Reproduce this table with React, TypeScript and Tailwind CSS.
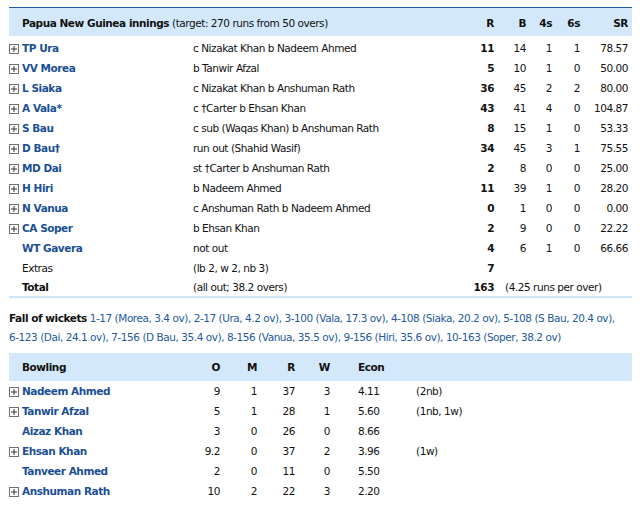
import React from "react";

const FONT = { fontFamily: '"DejaVu Sans", Verdana, sans-serif' };

function Plus() {
  return (
    <svg width="10" height="10" viewBox="0 0 10 10" className="block">
      <rect x="0.5" y="0.5" width="9" height="9" fill="#fff" stroke="#707070" />
      <line x1="2" y1="5" x2="8" y2="5" stroke="#333" />
      <line x1="5" y1="2" x2="5" y2="8" stroke="#333" />
    </svg>
  );
}

type Bat = [string, boolean, string, string, string, string, string, string];

const batting: Bat[] = [
  ["TP Ura", true, "c Nizakat Khan b Nadeem Ahmed", "11", "14", "1", "1", "78.57"],
  ["VV Morea", true, "b Tanwir Afzal", "5", "10", "1", "0", "50.00"],
  ["L Siaka", true, "c Nizakat Khan b Anshuman Rath", "36", "45", "2", "2", "80.00"],
  ["A Vala*", true, "c \u2020Carter b Ehsan Khan", "43", "41", "4", "0", "104.87"],
  ["S Bau", true, "c sub (Waqas Khan) b Anshuman Rath", "8", "15", "1", "0", "53.33"],
  ["D Bau\u2020", true, "run out (Shahid Wasif)", "34", "45", "3", "1", "75.55"],
  ["MD Dai", true, "st \u2020Carter b Anshuman Rath", "2", "8", "0", "0", "25.00"],
  ["H Hiri", true, "b Nadeem Ahmed", "11", "39", "1", "0", "28.20"],
  ["N Vanua", true, "c Anshuman Rath b Nadeem Ahmed", "0", "1", "0", "0", "0.00"],
  ["CA Soper", true, "b Ehsan Khan", "2", "9", "0", "0", "22.22"],
  ["WT Gavera", false, "not out", "4", "6", "1", "0", "66.66"],
];

type Bowl = [string, boolean, string, string, string, string, string, string];
const bowling: Bowl[] = [
  ["Nadeem Ahmed", true, "9", "1", "37", "3", "4.11", "(2nb)"],
  ["Tanwir Afzal", true, "5", "1", "28", "1", "5.60", "(1nb, 1w)"],
  ["Aizaz Khan", false, "3", "0", "26", "0", "8.66", ""],
  ["Ehsan Khan", true, "9.2", "0", "37", "2", "3.96", "(1w)"],
  ["Tanveer Ahmed", false, "2", "0", "11", "0", "5.50", ""],
  ["Anshuman Rath", true, "10", "2", "22", "3", "2.20", ""],
];

const batCols = "grid grid-cols-[13px_171px_267px_34px_32px_26px_28px_48px_4px]";
const bowlCols = "grid grid-cols-[13px_168px_30px_37px_38px_35px_77px_225px]";

export default function App() {
  return (
    <div className="w-[644px] h-[509px] bg-white text-[10.5px] tracking-[-0.45px] text-[#111]" style={FONT}>
      <div className="ml-[9px] w-[623px] pt-[7px]">
        <div className="h-px bg-[#1f5c9e]" />
        {/* batting header */}
        <div className={`${batCols} h-[28px] pt-[3px] items-center bg-[#d3e9fb]`}>
          <div />
          <div className="col-span-2 whitespace-nowrap">
            <span className="font-bold">Papua New Guinea innings</span> (target: 270 runs from 50 overs)
          </div>
          <div className="text-right font-bold">R</div>
          <div className="text-right font-bold">B</div>
          <div className="text-right font-bold">4s</div>
          <div className="text-right font-bold">6s</div>
          <div className="text-right font-bold">SR</div>
          <div />
        </div>
        <div className="mt-[2px]">
          {batting.map((r) => (
            <div key={r[0]} className={`${batCols} h-[20px] pt-[2px] items-center`}>
              <div>{r[1] ? <Plus /> : null}</div>
              <div className="font-bold text-[#1b4f95] whitespace-nowrap">{r[0]}</div>
              <div className="whitespace-nowrap">{r[2]}</div>
              <div className="text-right font-bold">{r[3]}</div>
              <div className="text-right">{r[4]}</div>
              <div className="text-right">{r[5]}</div>
              <div className="text-right">{r[6]}</div>
              <div className="text-right">{r[7]}</div>
              <div />
            </div>
          ))}
          <div className={`${batCols} h-[20px] pt-[2px] items-center`}>
            <div />
            <div>Extras</div>
            <div>(lb 2, w 2, nb 3)</div>
            <div className="text-right font-bold">7</div>
            <div className="col-span-5" />
          </div>
          <div className={`${batCols} h-[18px] pt-[1px] items-center`}>
            <div />
            <div className="font-bold">Total</div>
            <div>(all out; 38.2 overs)</div>
            <div className="text-right font-bold">163</div>
            <div className="col-span-5 pl-[11px] whitespace-nowrap">(4.25 runs per over)</div>
          </div>
        </div>
        <div className="h-[2px] bg-[#cfe6f8]" />

        {/* fall of wickets */}
        <div className="mt-[11px] leading-[19px] whitespace-nowrap text-[#25599c]">
          <span className="font-bold text-[#111]">Fall of wickets</span>{" "}
          1-17 (Morea, 3.4 ov), 2-17 (Ura, 4.2 ov), 3-100 (Vala, 17.3 ov), 4-108 (Siaka, 20.2 ov), 5-108 (S Bau, 20.4 ov),
          <br />
          6-123 (Dai, 24.1 ov), 7-156 (D Bau, 35.4 ov), 8-156 (Vanua, 35.5 ov), 9-156 (Hiri, 35.6 ov), 10-163 (Soper, 38.2 ov)
        </div>

        {/* bowling */}
        <div className={`${bowlCols} mt-[6px] h-[28px] pt-[2px] items-center bg-[#d3e9fb] font-bold`}>
          <div />
          <div>Bowling</div>
          <div className="text-right">O</div>
          <div className="text-right">M</div>
          <div className="text-right">R</div>
          <div className="text-right">W</div>
          <div className="pl-[28px]">Econ</div>
          <div />
        </div>
        {bowling.map((r) => (
          <div key={r[0]} className={`${bowlCols} h-[20px] pt-[2px] items-center`}>
            <div>{r[1] ? <Plus /> : null}</div>
            <div className="font-bold text-[#1b4f95] whitespace-nowrap">{r[0]}</div>
            <div className="text-right">{r[2]}</div>
            <div className="text-right">{r[3]}</div>
            <div className="text-right">{r[4]}</div>
            <div className="text-right">{r[5]}</div>
            <div className="pl-[28px]">{r[6]}</div>
            <div className="pl-[9px] whitespace-nowrap">{r[7]}</div>
          </div>
        ))}
      </div>
    </div>
  );
}
